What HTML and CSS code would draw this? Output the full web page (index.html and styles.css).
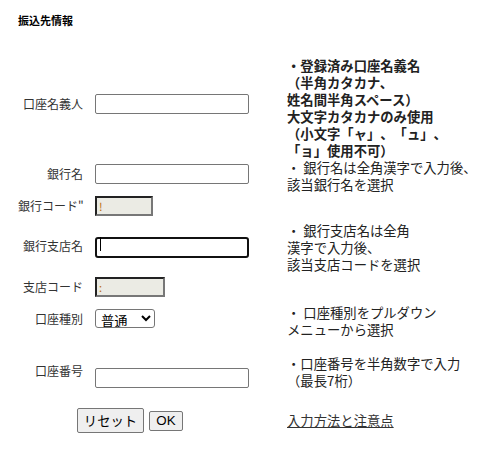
FILE: index.html
```html
<!DOCTYPE html>
<html lang="ja">
<head>
  <meta charset="UTF-8" />
  <title>振込先情報</title>
  <link rel="stylesheet" href="styles.css">
</head>
<body>
  <h1 class="title">振込先情報</h1>

  <form class="transfer-form">
    <div class="row row-name">
      <label class="label" for="holder">口座名義人</label>
      <div class="field"><input id="holder" class="text-input" type="text"></div>
      <p class="note note-strong">・登録済み口座名義名<br>（半角カタカナ、<br>姓名間半角スペース）<br>大文字カタカナのみ使用<br>（小文字「ャ」、「ュ」、<br>「ョ」使用不可）</p>
    </div>

    <div class="row row-bank">
      <label class="label" for="bank">銀行名</label>
      <div class="field"><input id="bank" class="text-input" type="text"></div>
      <p class="note">・ 銀行名は全角漢字で入力後、<br>該当銀行名を選択</p>
    </div>

    <div class="row row-bank-code">
      <label class="label" for="bank-code">銀行コード"</label>
      <div class="field"><input id="bank-code" class="text-input code-input bank-code" type="text" value="!" readonly></div>
    </div>

    <div class="row row-branch">
      <label class="label" for="branch">銀行支店名</label>
      <div class="field"><span class="focus-wrap"><input id="branch" class="text-input is-focused" type="text"></span></div>
      <p class="note">・ 銀行支店名は全角<br>漢字で入力後、<br>該当支店コードを選択</p>
    </div>

    <div class="row row-branch-code">
      <label class="label" for="branch-code">支店コード</label>
      <div class="field"><input id="branch-code" class="text-input code-input branch-code" type="text" value=":" readonly></div>
    </div>

    <div class="row row-type">
      <label class="label" for="type">口座種別</label>
      <div class="field">
        <select id="type" class="type-select">
          <option>普通</option>
          <option>当座</option>
        </select>
      </div>
      <p class="note">・ 口座種別をプルダウン<br>メニューから選択</p>
    </div>

    <div class="row row-number">
      <label class="label" for="number">口座番号</label>
      <div class="field"><input id="number" class="text-input" type="text"></div>
      <p class="note">・口座番号を半角数字で入力<br>（最長7桁）</p>
    </div>

    <div class="row row-actions">
      <div class="actions">
        <button type="reset" class="btn btn-reset">リセット</button>
        <button type="button" class="btn btn-ok">OK</button>
      </div>
      <a class="help-link" href="#">入力方法と注意点</a>
    </div>
  </form>
</body>
</html>
```

FILE: styles.css
```css
html, body {
  margin: 0;
  padding: 0;
  background: #fff;
  font-family: "Noto Sans CJK JP", "Noto Sans", sans-serif;
  color: #222;
  text-spacing-trim: space-all;
}

body {
  padding: 13px 0 0 18px;
}

.title {
  margin: 0;
  font-size: 11px;
  line-height: 14px;
  font-weight: bold;
  color: #000;
}

.transfer-form {
  margin-top: 30px;
}

.row {
  display: grid;
  grid-template-columns: 65px 180px 1fr;
  column-gap: 12px;
  align-items: center;
}

.label {
  font-size: 12px;
  line-height: 20px;
  color: #333;
  text-align: right;
  white-space: nowrap;
}

.field {
  display: flex;
  align-items: center;
}

.note {
  margin: 0;
  font-size: 13.33px;
  line-height: 17px;
  white-space: nowrap;
}

.note-strong {
  font-weight: bold;
}

/* inputs */
.text-input {
  box-sizing: border-box;
  width: 154px;
  height: 20px;
  padding: 1px 3px;
  border: 1px solid #767676;
  border-radius: 2px;
  font-family: inherit;
  font-size: 13px;
  background: #fff;
}

.code-input {
  border-width: 2px;
  border-color: #222 #777 #777 #222;
  border-radius: 0;
  background: #ebebe4;
  color: #b8690b;
  font-size: 11px;
  padding: 0 2px;
}

.bank-code { width: 58px; }
.branch-code { width: 70px; }

.focus-wrap {
  position: relative;
  display: inline-block;
}

.is-focused {
  border: 2px solid #111;
  border-radius: 3px;
  height: 21px;
}

.focus-wrap::after {
  content: "";
  position: absolute;
  left: 5px;
  top: 3px;
  width: 1px;
  height: 14px;
  background: #000;
}

.type-select {
  box-sizing: border-box;
  width: 60px;
  height: 19px;
  padding: 0 0 0 1px;
  border: 1px solid #767676;
  border-radius: 3px;
  font-family: inherit;
  font-size: 13.33px;
  line-height: 15px;
  color: #000;
  background: #fff;
}

/* per-row vertical spacing */
.row-name .label,
.row-name .field { margin-bottom: 9px; }

.row-bank .label,
.row-bank .field { margin-bottom: 4px; }

.row-bank-code { min-height: 29px; }
.row-bank-code .label,
.row-bank-code .field { margin-bottom: 4px; }

.row-branch .label,
.row-branch .field { margin-bottom: 3px; }

.row-branch-code { min-height: 31px; }
.row-branch-code .label,
.row-branch-code .field { margin-bottom: 3px; }

.row-type { margin-bottom: 17px; }
.row-type .label,
.row-type .field { margin-bottom: 5px; }

.row-number .label { margin-bottom: 3px; }
.row-number .field { margin-top: 12px; }

.row-actions {
  margin-top: 19px;
}

.actions {
  grid-column: 1 / 3;
  display: flex;
  align-items: center;
  gap: 5px;
  padding-left: 59px;
}

.btn {
  box-sizing: border-box;
  padding: 0;
  border: 1px solid #767676;
  border-radius: 2px;
  background: #efefef;
  font-family: inherit;
  font-size: 13.33px;
  color: #000;
}

.btn-reset {
  width: 67px;
  height: 25px;
}

.btn-ok {
  width: 34px;
  height: 20px;
  font-family: "Liberation Sans", Arial, sans-serif;
}

.help-link {
  font-size: 13.33px;
  line-height: 17px;
  color: #333;
  text-decoration: underline;
  white-space: nowrap;
}
```
